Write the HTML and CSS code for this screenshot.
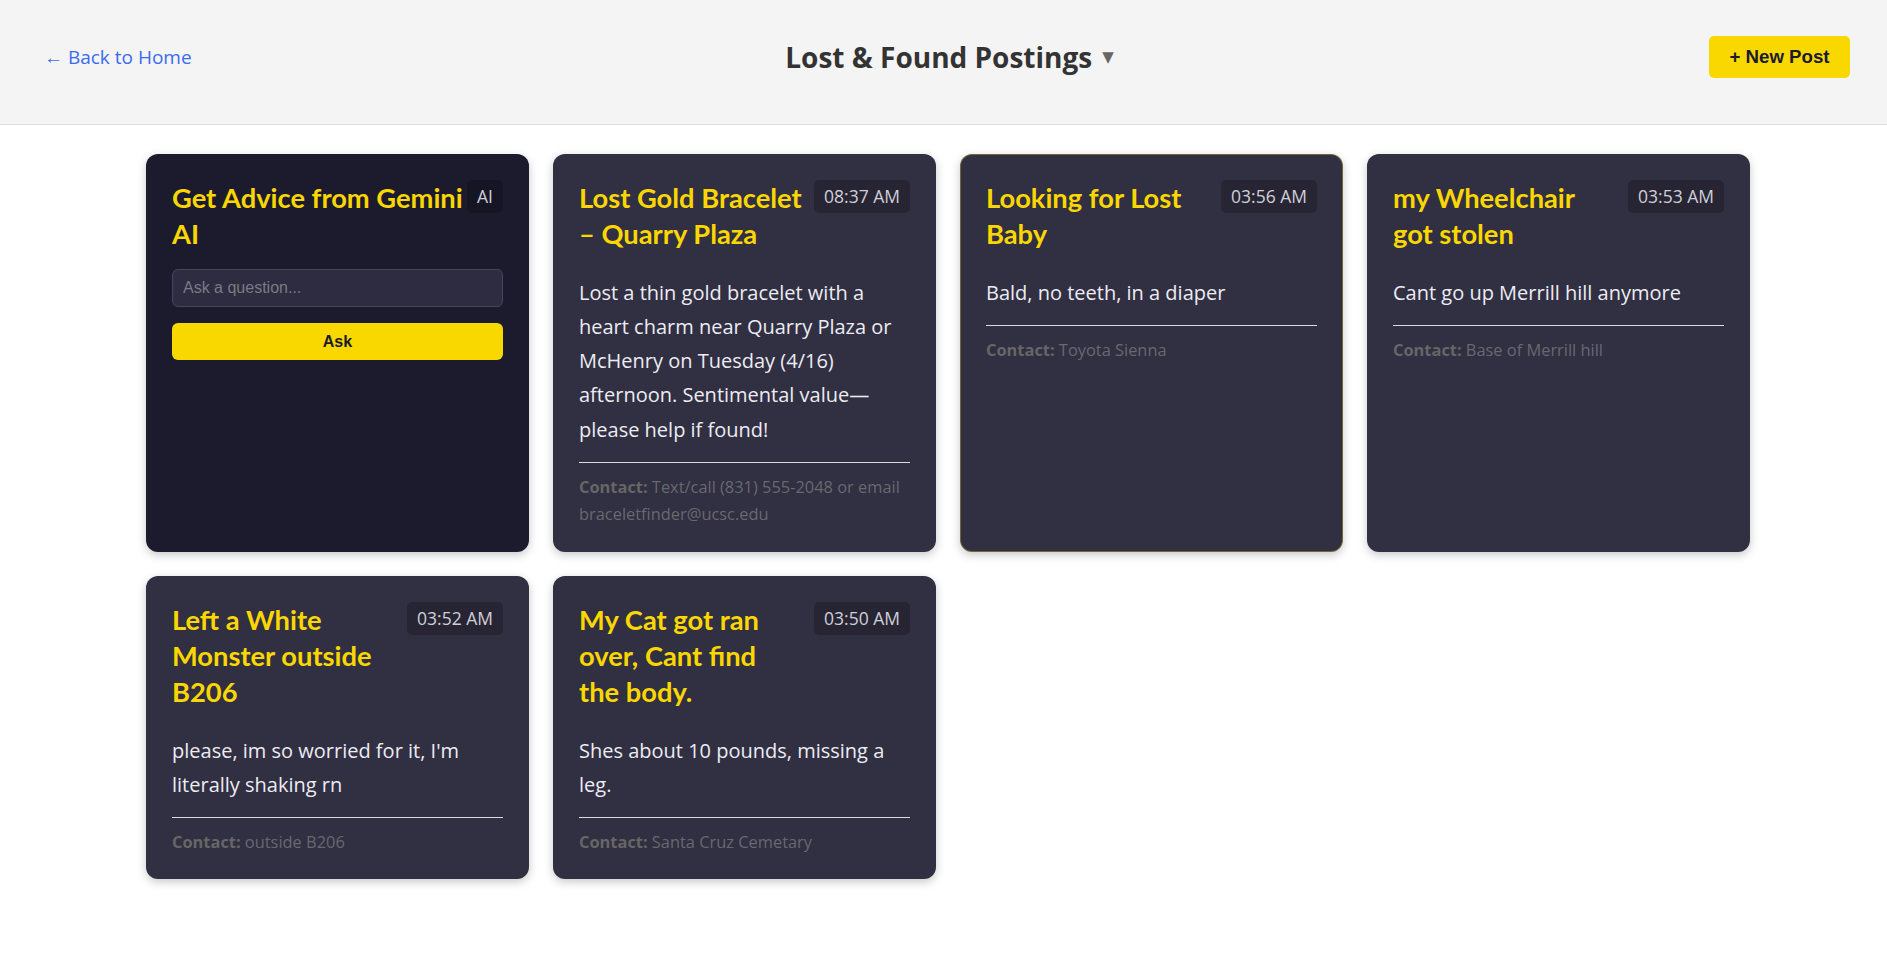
FILE: index.html
```html
<!DOCTYPE html>
<html lang="en">
<head>
<meta charset="utf-8">
<title>Lost &amp; Found Postings</title>
<link rel="stylesheet" href="styles.css">
</head>
<body>
<header class="topbar">
  <a class="back-link" href="#">← Back to Home</a>
  <div class="page-title">
    <h1>Lost &amp; Found Postings</h1>
    <span class="caret">▼</span>
  </div>
  <div class="topbar-right">
    <button class="new-post">+ New Post</button>
  </div>
</header>

<main class="board">
  <section class="card card-ai">
    <div class="card-head">
      <h3 class="card-title">Get Advice from Gemini AI</h3>
      <span class="stamp">AI</span>
    </div>
    <input class="ask-input" type="text" placeholder="Ask a question...">
    <button class="ask-btn">Ask</button>
  </section>

  <article class="card">
    <div class="card-head">
      <h3 class="card-title">Lost Gold Bracelet – Quarry Plaza</h3>
      <span class="stamp">08:37 AM</span>
    </div>
    <p class="card-body">Lost a thin gold bracelet with a heart charm near Quarry Plaza or McHenry on Tuesday (4/16) afternoon. Sentimental value—please help if found!</p>
    <p class="card-contact"><strong>Contact:</strong> Text/call (831) 555-2048 or email braceletfinder@ucsc.edu</p>
  </article>

  <article class="card card-active">
    <div class="card-head">
      <h3 class="card-title">Looking for Lost Baby</h3>
      <span class="stamp">03:56 AM</span>
    </div>
    <p class="card-body">Bald, no teeth, in a diaper</p>
    <p class="card-contact"><strong>Contact:</strong> Toyota Sienna</p>
  </article>

  <article class="card">
    <div class="card-head">
      <h3 class="card-title">my Wheelchair got stolen</h3>
      <span class="stamp">03:53 AM</span>
    </div>
    <p class="card-body">Cant go up Merrill hill anymore</p>
    <p class="card-contact"><strong>Contact:</strong> Base of Merrill hill</p>
  </article>

  <article class="card">
    <div class="card-head">
      <h3 class="card-title">Left a White Monster outside B206</h3>
      <span class="stamp">03:52 AM</span>
    </div>
    <p class="card-body">please, im so worried for it, I'm literally shaking rn</p>
    <p class="card-contact"><strong>Contact:</strong> outside B206</p>
  </article>

  <article class="card">
    <div class="card-head">
      <h3 class="card-title">My Cat got ran over, Cant find<br>the body.</h3>
      <span class="stamp">03:50 AM</span>
    </div>
    <p class="card-body">Shes about 10 pounds, missing a leg.</p>
    <p class="card-contact"><strong>Contact:</strong> Santa Cruz Cemetary</p>
  </article>
</main>
</body>
</html>
```
FILE: styles.css
```css
* { box-sizing: border-box; }

body {
  margin: 0;
  background: #ffffff;
  font-family: "Open Sans", "Noto Sans", sans-serif;
  color: #333;
}

.topbar {
  display: grid;
  grid-template-columns: 1fr auto 1fr;
  align-items: center;
  padding: 36px 37px 46px 44px;
  background: #f4f4f4;
  border-bottom: 1px solid #dddddd;
}

.back-link {
  justify-self: start;
  color: #3a6cf0;
  text-decoration: none;
  font-size: 19px;
  line-height: 24px;
}

.page-title {
  display: flex;
  align-items: center;
  gap: 10px;
  padding-left: 5px;
}

.page-title h1 {
  margin: 0;
  font-size: 28px;
  line-height: 36px;
  font-weight: 700;
  color: #333333;
}

.caret {
  color: #666666;
  font-size: 15px;
  font-family: "DejaVu Sans", sans-serif;
  line-height: 20px;
}

.topbar-right {
  justify-self: end;
}

.new-post {
  display: block;
  border: 0;
  border-radius: 5px;
  background: #f9d800;
  color: #1c1a2e;
  font-family: "Liberation Sans", Arial, sans-serif;
  font-weight: 700;
  font-size: 18.67px;
  line-height: 22px;
  padding: 10px 20px;
  width: 141px;
}

.board {
  display: grid;
  grid-template-columns: repeat(4, 383px);
  gap: 24px 24px;
  margin: 29px 0 40px 146px;
}

.card {
  background: #312f42;
  border-radius: 12px;
  padding: 25px 25px 23px;
  box-shadow: 0 3px 10px rgba(0, 0, 0, 0.22);
  border: 1px solid transparent;
}

.card-ai {
  background: #1c1b2e;
}

.card-active {
  border-color: rgba(240, 210, 30, 0.35);
}

.card-head {
  display: flex;
  justify-content: space-between;
  align-items: flex-start;
  gap: 11px;
  margin-bottom: 24px;
}

.card-ai .card-head {
  gap: 4px;
  margin-bottom: 17px;
}

.card-title {
  margin: 0;
  font-family: "Lato", "Open Sans", sans-serif;
  font-size: 27.3px;
  line-height: 36px;
  font-weight: 700;
  color: #fad700;
}

.stamp {
  flex-shrink: 0;
  background: rgba(0, 0, 0, 0.2);
  color: #cfcfd8;
  border-radius: 5px;
  padding: 5px 10px;
  font-size: 17.5px;
  line-height: 23px;
  white-space: nowrap;
}

.card-body {
  margin: 0;
  color: #ececf2;
  font-size: 20px;
  line-height: 34.13px;
}

.card-contact {
  margin: 15px 0 0;
  padding-top: 10px;
  border-top: 1px solid #dcdcdc;
  color: #686870;
  font-size: 16.4px;
  line-height: 27.5px;
}

.card-contact strong {
  color: #666;
  font-weight: 700;
}

.ask-input {
  display: block;
  width: 100%;
  height: 38px;
  background: #2d2c40;
  border: 1px solid #48475a;
  border-radius: 6px;
  padding: 0 10px;
  color: #ddd;
  font-family: "Liberation Sans", Arial, sans-serif;
  font-size: 16px;
}

.ask-input::placeholder {
  color: #7a7a85;
}

.ask-btn {
  display: block;
  width: 100%;
  height: 37px;
  margin-top: 16px;
  border: 0;
  border-radius: 6px;
  background: #f9d800;
  color: #1c1a2e;
  font-family: "Liberation Sans", Arial, sans-serif;
  font-weight: 700;
  font-size: 16px;
}
```
